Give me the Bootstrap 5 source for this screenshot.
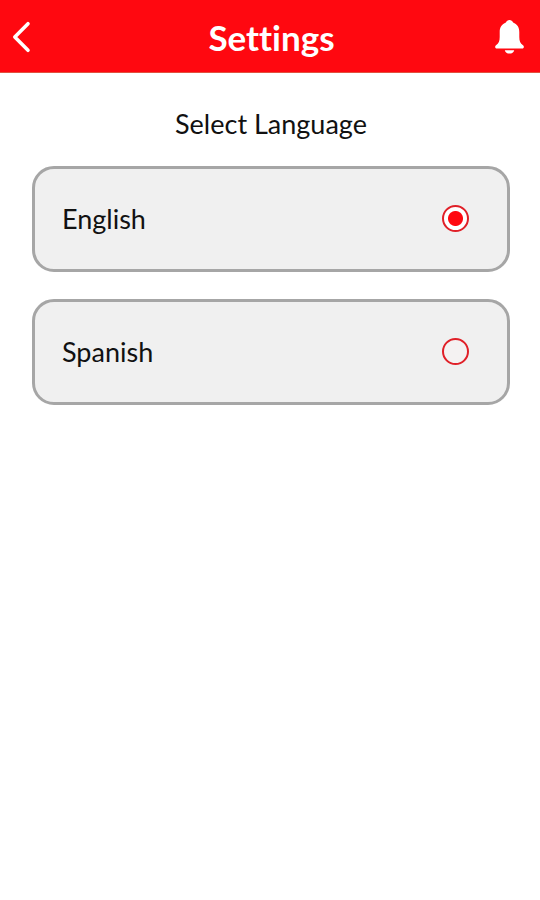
<!DOCTYPE html>
<html lang="en">
<head>
<meta charset="utf-8">
<meta name="viewport" content="width=device-width, initial-scale=1">
<title>Settings</title>
<link href="https://cdn.jsdelivr.net/npm/bootstrap@5.3.0/dist/css/bootstrap.min.css" rel="stylesheet">
<style>
body { font-family: Lato, "Open Sans", sans-serif; font-variant-ligatures: none; color: #111; background: #fff; }
.app-bar { background: #ff0810; height: 73px; border-bottom: 1px solid #e0523f; padding: 2px 16px 0 12px; }
.app-bar svg { display: block; }
.app-title { font-size: 35px; line-height: 40px; font-weight: 700; }
.back-btn { width: 36px; }
.page-main { padding: 33px 30px 32px 32px; }
.section-title { font-size: 27px; line-height: 36px; margin-bottom: 24px; font-weight: 400; }
.option-list { gap: 27px; }
.option-card { height: 106px; border: 3px solid #a6a6a6; border-radius: 22px; background: #f0f0f0; padding: 0 38px 1px 27px; font-size: 27px; line-height: 36px; cursor: pointer; }
.option-card .form-check-input { width: 27px; height: 27px; border: 2px solid #e02028; background-color: #f4f2f2; }
.option-card .form-check-input:checked { background-color: #fff; background-image: radial-gradient(circle, #ff0810 7px, transparent 8px); }
</style>
</head>
<body>
<header class="app-bar d-flex align-items-center justify-content-between text-white">
  <button type="button" class="btn p-0 border-0 back-btn text-white" aria-label="Back">
    <svg width="20" height="32" viewBox="0 0 20 32" fill="none" stroke="currentColor" stroke-width="3.6" stroke-linecap="round" stroke-linejoin="round"><path d="M16 2.700 2.800 16 16 29.300"/></svg>
  </button>
  <h1 class="app-title m-0">Settings</h1>
  <button type="button" class="btn p-0 border-0 text-white" aria-label="Notifications">
    <svg width="29" height="34" viewBox="0 0 29 34" fill="currentColor"><path d="M14.500 0c1.700 0 3 1 3.600 2.600 4 1.400 6.200 5 6.200 9.400v5c0 4 1 6.300 3.700 8.300 1.500 1.200 1 3.200-.9 3.200H1.900c-1.900 0-2.400-2-.9-3.200 2.700-2 3.700-4.300 3.700-8.300v-5c0-4.400 2.200-8 6.200-9.400C11.500 1 12.800 0 14.500 0z"/><path d="M9.800 30.200h9.400c-.4 2.200-2.400 3.400-4.700 3.400s-4.300-1.200-4.700-3.400z"/></svg>
  </button>
</header>
<main class="page-main">
  <h2 class="section-title text-center" id="language-title">Select Language</h2>
  <div class="option-list d-flex flex-column" role="radiogroup" aria-labelledby="language-title">
    <label class="option-card d-flex align-items-center justify-content-between" for="lang-en">
      <span>English</span>
      <input class="form-check-input m-0 shadow-none" type="radio" name="language" id="lang-en" checked>
    </label>
    <label class="option-card d-flex align-items-center justify-content-between" for="lang-es">
      <span>Spanish</span>
      <input class="form-check-input m-0 shadow-none" type="radio" name="language" id="lang-es">
    </label>
  </div>
</main>
<script src="https://cdn.jsdelivr.net/npm/bootstrap@5.3.0/dist/js/bootstrap.bundle.min.js"></script>
</body>
</html>
